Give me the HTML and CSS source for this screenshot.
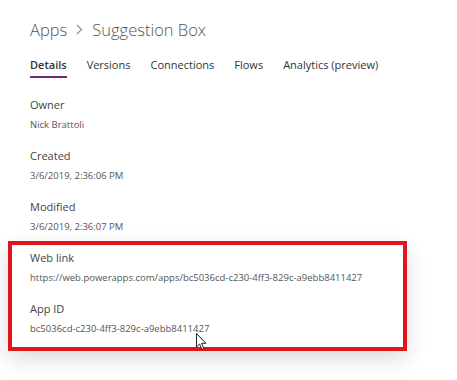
FILE: index.html
```html
<!DOCTYPE html>
<html lang="en">

<head>
    <meta charset="UTF-8" />
    <meta name="viewport" content="width=device-width, initial-scale=1.0" />
    <title>Apps - Suggestion Box</title>
    <link rel="stylesheet" href="styles.css">
</head>

<body>
    <div class="page">
        <h1 class="breadcrumb">
            <span>Apps</span>
            <svg class="chevron" width="7" height="11" viewBox="0 0 7 11">
                <path d="M1 1 L5.5 5.5 L1 10" fill="none" stroke="#8a8a8a" stroke-width="1.1" />
            </svg>
            <span>Suggestion Box</span>
        </h1>

        <ul class="tabs">
            <li class="active">Details</li>
            <li>Versions</li>
            <li>Connections</li>
            <li>Flows</li>
            <li>Analytics (preview)</li>
        </ul>

        <div class="field">
            <div class="label">Owner</div>
            <div class="value">Nick Brattoli</div>
        </div>
        <div class="field">
            <div class="label">Created</div>
            <div class="value">3/6/2019, 2:36:06 PM</div>
        </div>
        <div class="field">
            <div class="label">Modified</div>
            <div class="value">3/6/2019, 2:36:07 PM</div>
        </div>

        <div class="highlight">
            <div class="field">
                <div class="label">Web link</div>
                <div class="value">https://web.powerapps.com/apps/bc5036cd-c230-4ff3-829c-a9ebb8411427</div>
            </div>
            <div class="field">
                <div class="label">App ID</div>
                <div class="value">bc5036cd-c230-4ff3-829c-a9ebb8411427</div>
            </div>
        </div>
    </div>

    <svg class="cursor" width="12" height="18" viewBox="0 0 12 18">
        <path d="M0.5 0.5 L0.5 14 L3.6 11 L5.8 16.5 L7.8 15.6 L5.6 10.3 L10 10.3 Z" fill="#fff" stroke="#222" stroke-width="1" stroke-linejoin="round" />
    </svg>
</body>

</html>
```

FILE: styles.css
```css
* {
    margin: 0;
    padding: 0;
    box-sizing: border-box;
}

body {
    font-family: 'Open Sans', 'Segoe UI', sans-serif;
    background-color: #ffffff;
    color: #333;
    position: relative;
    min-height: 100vh;
}

.page {
    padding: 16px 0 0 30px;
}

.breadcrumb {
    display: flex;
    align-items: center;
    gap: 9px;
    font-size: 16.5px;
    font-weight: 300;
    line-height: 28px;
    color: #555;
    margin-bottom: 11px;
}

.chevron {
    margin-top: -2px;
}

.tabs {
    list-style: none;
    display: flex;
    gap: 20px;
    font-size: 11px;
    color: #333;
    margin-bottom: 17px;
}

.tabs li {
    line-height: 20px;
    padding-bottom: 1px;
    border-bottom: 2px solid transparent;
}

.tabs li.active {
    font-weight: 600;
    border-bottom-color: #742774;
}

.field {
    margin-bottom: 13px;
}

.label {
    font-size: 11px;
    line-height: 20px;
    color: #444;
}

.value {
    font-size: 9.5px;
    line-height: 16px;
    margin-top: 2px;
    color: #555;
}

.highlight {
    width: 399px;
    margin: -7px 0 0 -22px;
    padding: 3px 0 10px 18px;
    border: 4px solid #e2151c;
    box-shadow: 0 8px 20px rgba(0, 0, 0, 0.14);
}

.highlight .field:last-child {
    margin-bottom: 0;
}

.cursor {
    position: absolute;
    left: 196px;
    top: 333px;
}
```
